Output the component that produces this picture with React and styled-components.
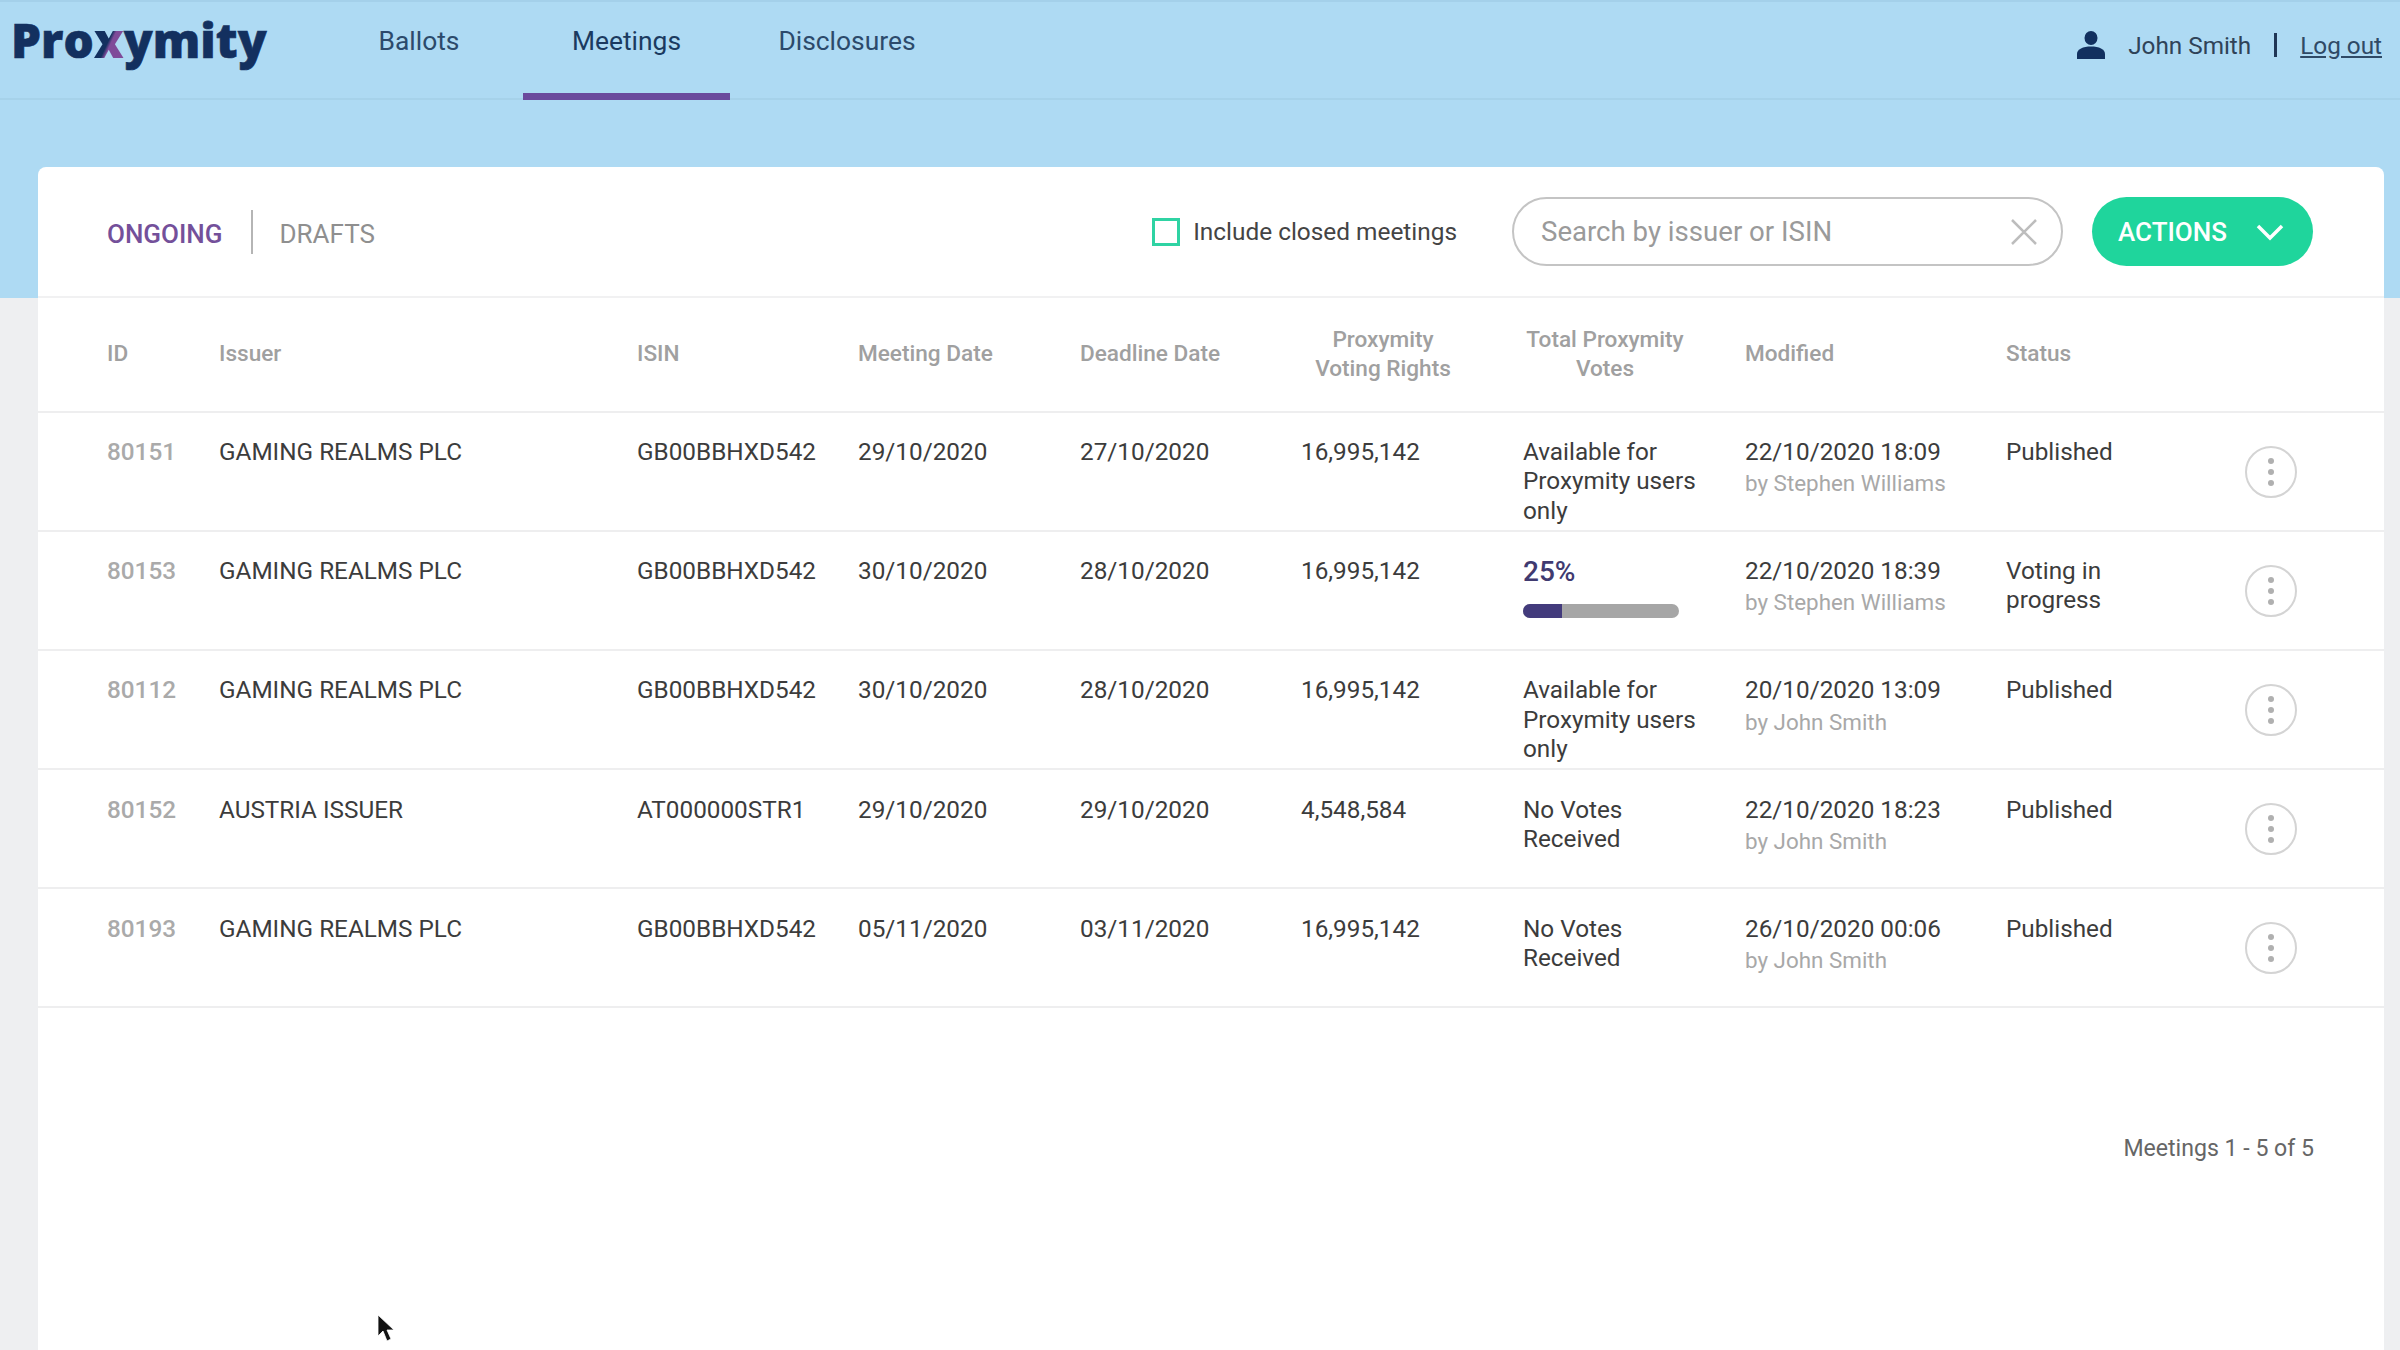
import React from "react";
import styled, { createGlobalStyle } from "styled-components";

const Global = createGlobalStyle`
  html, body { margin: 0; padding: 0; height: 100%; overflow: hidden; }
  body { font-family: Roboto, "Liberation Sans", sans-serif; -webkit-font-smoothing: antialiased; }
  * { box-sizing: border-box; }
`;

const Page = styled.div`
  position: relative;
  width: 2400px;
  height: 1350px;
  overflow: hidden;
  background: linear-gradient(#aedaf3 298px, #eeeff1 298px);
`;
const Header = styled.header`
  height: 100px;
  display: flex;
  align-items: stretch;
  padding: 0 18px 0 11px;
  border-top: 2px solid #a4d0ea;
  border-bottom: 2px solid #a6d2ea;
`;
const Logo = styled.div`
  width: 341px;
  font-family: "Open Sans", sans-serif;
  font-weight: 800;
  font-size: 47.6px;
  line-height: 76px;
  color: #13305f;
  -webkit-text-stroke: 0.6px #13305f;
`;
const LogoX = styled.span`
  background: linear-gradient(115deg, #13305f 50%, #7f4b99 56%);
  -webkit-background-clip: text;
  background-clip: text;
  color: transparent;
  -webkit-text-stroke: 0;
`;
const Nav = styled.nav`
  display: flex;
`;
const NavItem = styled.a`
  width: ${p => p.$w}px;
  margin-left: ${p => p.$ml}px;
  height: 98px;
  padding-top: 19px;
  text-align: center;
  font-size: 26.4px;
  line-height: 40px;
  color: ${p => (p.$active ? "#1b3a60" : "#2c4a6b")};
  border-bottom: ${p => (p.$active ? "7px solid #6b4a9c" : "0")};
`;
const UserBox = styled.div`
  margin-left: auto;
  display: flex;
  align-items: center;
  height: 86px;
  font-size: 24.3px;
  color: #2f4358;
`;
const UserName = styled.span`
  margin-left: 23px;
`;
const Bar = styled.span`
  width: 3px;
  height: 24px;
  background: #1f3656;
  margin: 0 23px;
`;
const LogOut = styled.a`
  text-decoration: underline;
  color: #2f4a66;
`;

const Card = styled.main`
  margin: 67px 16px 0 38px;
  height: 1183px;
  background: #fff;
  border-radius: 8px 8px 0 0;
`;
const Toolbar = styled.div`
  height: 130.5px;
  display: flex;
  align-items: center;
  padding: 1px 71px 0 69px;
  border-bottom: 2px solid #f1f1f2;
`;
const Tab = styled.span`
  font-size: 26px;
  padding-top: 5px;
  color: ${p => (p.$active ? "#74509a" : "#8f8f8f")};
  font-weight: ${p => (p.$active ? 500 : 400)};
`;
const TabDivider = styled.span`
  width: 2px;
  height: 44px;
  background: #b5b5b5;
  margin: 0 27px 0 28px;
`;
const CheckRow = styled.label`
  margin-left: auto;
  display: flex;
  align-items: center;
  gap: 13px;
  font-size: 24.4px;
  color: #444;
`;
const CheckBox = styled.span`
  width: 28px;
  height: 28px;
  border: 3px solid #2fd3a3;
`;
const Search = styled.div`
  margin-left: 55px;
  width: 551px;
  height: 69px;
  border: 2px solid #c4c4c4;
  border-radius: 35px;
  display: flex;
  align-items: center;
  justify-content: space-between;
  padding: 0 23px 0 27px;
  font-size: 27.6px;
  color: #9a9a9a;
`;
const ActionsButton = styled.button`
  margin-left: 29px;
  width: 221px;
  height: 69px;
  border: 0;
  border-radius: 35px;
  background: #1fd59c;
  color: #fff;
  font-family: inherit;
  font-size: 26px;
  font-weight: 500;
  display: flex;
  align-items: center;
  justify-content: space-between;
  padding: 0 28px 0 26px;
`;

const COLS = "112px 418px 221px 222px 221px 222px 222px 261px 201px 131px";
const HeadRow = styled.div`
  display: grid;
  grid-template-columns: ${COLS};
  align-items: center;
  height: 115px;
  padding: 0 0 1px 69px;
  border-bottom: 2px solid #eeeeef;
  font-size: 22.6px;
  font-weight: 500;
  line-height: 29px;
  color: #a0a0a0;
`;
const CenterHead = styled.div`
  width: ${p => p.$w}px;
  text-align: center;
`;
const Row = styled.div`
  display: grid;
  grid-template-columns: ${COLS};
  align-items: start;
  height: 119.2px;
  padding: 24.5px 0 0 69px;
  border-bottom: 2px solid #eeeeef;
  font-size: 24.3px;
  line-height: 29.3px;
  color: #3c3c3c;
`;
const IdCell = styled.div`
  color: #aaaaaa;
  font-weight: 500;
`;
const Wrapped = styled.div`
  max-width: ${p => p.$w}px;
`;
const Sub = styled.div`
  font-size: 22.4px;
  color: #a8a8a8;
  margin-top: 3px;
`;
const Percent = styled.div`
  padding-top: 1px;
  font-size: 28px;
  font-weight: 500;
  color: #403a70;
`;
const Track = styled.div`
  width: 156px;
  height: 14px;
  margin-top: 18px;
  border-radius: 7px;
  background: #a6a6a6;
  overflow: hidden;
`;
const Fill = styled.div`
  height: 100%;
  background: #433b7c;
`;
const Kebab = styled.div`
  width: 52px;
  height: 52px;
  margin: 8.5px 0 0 38px;
  border: 2px solid #d4d4d4;
  border-radius: 50%;
  display: flex;
  flex-direction: column;
  align-items: center;
  justify-content: center;
  gap: 5px;
`;
const Dot = styled.span`
  width: 6px;
  height: 6px;
  border-radius: 50%;
  background: #b0b0b0;
`;
const Footer = styled.div`
  margin-top: 126px;
  padding-right: 70px;
  text-align: right;
  font-size: 23.1px;
  line-height: 30px;
  color: #666;
`;
const Cursor = styled.svg`
  position: absolute;
  left: 377px;
  top: 1314px;
`;

const rows = [
  ["80151", "GAMING REALMS PLC", "GB00BBHXD542", "29/10/2020", "27/10/2020", "16,995,142", "Available for Proxymity users only", "22/10/2020 18:09", "by Stephen Williams", "Published"],
  ["80153", "GAMING REALMS PLC", "GB00BBHXD542", "30/10/2020", "28/10/2020", "16,995,142", 25, "22/10/2020 18:39", "by Stephen Williams", "Voting in progress"],
  ["80112", "GAMING REALMS PLC", "GB00BBHXD542", "30/10/2020", "28/10/2020", "16,995,142", "Available for Proxymity users only", "20/10/2020 13:09", "by John Smith", "Published"],
  ["80152", "AUSTRIA ISSUER", "AT000000STR1", "29/10/2020", "29/10/2020", "4,548,584", "No Votes Received", "22/10/2020 18:23", "by John Smith", "Published"],
  ["80193", "GAMING REALMS PLC", "GB00BBHXD542", "05/11/2020", "03/11/2020", "16,995,142", "No Votes Received", "26/10/2020 00:06", "by John Smith", "Published"],
];

const UserIcon = () => (
  <svg width="28" height="28" viewBox="0 0 28 28" fill="#12305f">
    <ellipse cx="14" cy="7" rx="6.5" ry="7" />
    <path d="M0 28v-5c0-5 6-7.5 14-7.5S28 18 28 23v5z" />
  </svg>
);

export default function App() {
  return (
    <Page>
      <Global />
      <Header>
        <Logo>Pro<LogoX>x</LogoX>ymity</Logo>
        <Nav>
          <NavItem $w={100} $ml={17}>Ballots</NavItem>
          <NavItem $w={207} $ml={54} $active>Meetings</NavItem>
          <NavItem $w={150} $ml={42}>Disclosures</NavItem>
        </Nav>
        <UserBox>
          <UserIcon />
          <UserName>John Smith</UserName>
          <Bar />
          <LogOut>Log out</LogOut>
        </UserBox>
      </Header>
      <Card>
        <Toolbar>
          <Tab $active>ONGOING</Tab>
          <TabDivider />
          <Tab>DRAFTS</Tab>
          <CheckRow><CheckBox />Include closed meetings</CheckRow>
          <Search>
            Search by issuer or ISIN
            <svg width="28" height="28" viewBox="0 0 28 28" fill="none" stroke="#bdbdbd" strokeWidth="2.5">
              <path d="M2 2l24 24M26 2L2 26" />
            </svg>
          </Search>
          <ActionsButton>
            ACTIONS
            <svg width="30" height="20" viewBox="0 0 30 20" fill="none" stroke="#fff" strokeWidth="3.5">
              <path d="M3 4l12 12L27 4" />
            </svg>
          </ActionsButton>
        </Toolbar>
        <HeadRow>
          <div>ID</div>
          <div>Issuer</div>
          <div>ISIN</div>
          <div>Meeting Date</div>
          <div>Deadline Date</div>
          <CenterHead $w={164}>Proxymity<br />Voting Rights</CenterHead>
          <CenterHead $w={164}>Total Proxymity<br />Votes</CenterHead>
          <div>Modified</div>
          <div>Status</div>
        </HeadRow>
        {rows.map(r => (
          <Row key={r[0]}>
            <IdCell>{r[0]}</IdCell>
            <div>{r[1]}</div>
            <div>{r[2]}</div>
            <div>{r[3]}</div>
            <div>{r[4]}</div>
            <div>{r[5]}</div>
            {typeof r[6] === "number" ? (
              <div>
                <Percent>{r[6]}%</Percent>
                <Track><Fill style={{ width: `${r[6]}%` }} /></Track>
              </div>
            ) : (
              <Wrapped $w={185}>{r[6]}</Wrapped>
            )}
            <div>
              {r[7]}
              <Sub>{r[8]}</Sub>
            </div>
            <Wrapped $w={110}>{r[9]}</Wrapped>
            <Kebab><Dot /><Dot /><Dot /></Kebab>
          </Row>
        ))}
        <Footer>Meetings 1 - 5 of 5</Footer>
      </Card>
      <Cursor width="20" height="30" viewBox="0 0 20 30">
        <path d="M1 1l0 21 5-5 4 10 4-2-4-9 7 0z" fill="#111" stroke="#fff" strokeWidth="0.8" />
      </Cursor>
    </Page>
  );
}
